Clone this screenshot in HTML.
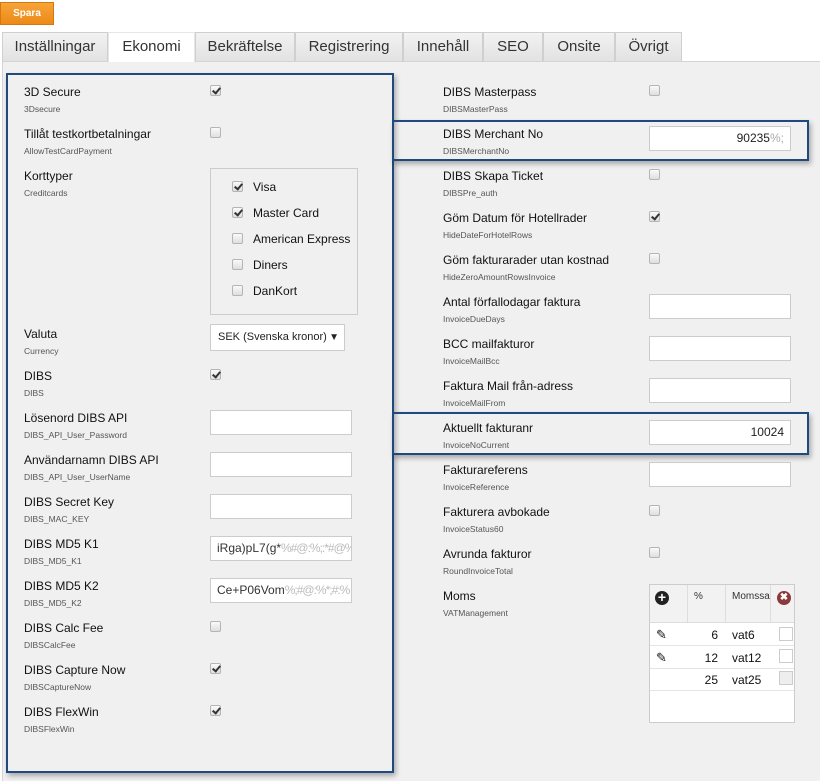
<!DOCTYPE html>
<html><head><meta charset="utf-8"><style>
body{margin:0;width:820px;height:784px;background:#fff;font-family:"Liberation Sans",Arial,sans-serif;position:relative;overflow:hidden}
div,span{position:absolute;box-sizing:border-box}
.btn{left:0;top:2px;width:54px;height:23px;background:linear-gradient(#f7a43a,#ec8a16);border:1px solid #d27a10;color:#fff;font-size:10px;font-weight:bold;line-height:21px;text-align:center}
.tab{top:32px;height:29px;background:linear-gradient(#f2f2f2,#e2e2e2);border:1px solid #cfcfcf;border-bottom:none;font-size:15px;color:#333;text-align:center;line-height:28px}
.tab.a{background:#fff;height:30px}
.content{left:2px;top:61px;width:818px;height:720px;background:#f0f0f0;border-left:1px solid #d4d4d4;border-top:1px solid #d4d4d4}
.l{font-size:12px;color:#111;line-height:14px;white-space:nowrap}
.s{font-size:8.5px;color:#555;line-height:10px;white-space:nowrap}
.cb{width:11px;height:11px;border:1px solid #b5b5b5;border-radius:2px;background:linear-gradient(#fafafa,#dedede)}
.cb.c::after{content:"";position:absolute;left:3px;top:0px;width:3px;height:6px;border:solid #333;border-width:0 2px 2px 0;transform:rotate(40deg)}
.in{width:142px;height:25px;background:#fff;border:1px solid #ccc;font-size:12px;line-height:23px;padding:0 6px;color:#222;white-space:nowrap;overflow:hidden}
.blue{border:2px solid #1f4a80;box-shadow:2px 3px 5px rgba(0,0,0,.3)}
</style></head><body>
<div class="btn">Spara</div>
<div class="tab" style="left:2px;width:106px">Inställningar</div>
<div class="tab" style="left:195px;width:100px">Bekräftelse</div>
<div class="tab" style="left:295px;width:108px">Registrering</div>
<div class="tab" style="left:403px;width:80px">Innehåll</div>
<div class="tab" style="left:483px;width:60px">SEO</div>
<div class="tab" style="left:543px;width:72px">Onsite</div>
<div class="tab" style="left:615px;width:67px">Övrigt</div>
<div class="content"></div>
<div class="tab a" style="left:108px;width:87px;border-color:#e6e6e6">Ekonomi</div>

<div class="blue" style="left:6px;top:73px;width:388px;height:700px"></div>
<div class="blue" style="left:392px;top:120px;width:417px;height:41px;border-left:none"></div>
<div class="blue" style="left:392px;top:412px;width:417px;height:43px;border-left:none"></div>

<div class="l" style="left:24px;top:85px">3D Secure</div><div class="s" style="left:24px;top:104px">3Dsecure</div><div class="cb c" style="left:210px;top:85px"></div>
<div class="l" style="left:24px;top:127px">Tillåt testkortbetalningar</div><div class="s" style="left:24px;top:146px">AllowTestCardPayment</div><div class="cb" style="left:210px;top:127px"></div>
<div class="l" style="left:24px;top:169px">Korttyper</div><div class="s" style="left:24px;top:188px">Creditcards</div>
<div style="left:210px;top:168px;width:148px;height:147px;border:1px solid #ccc"></div>
<div class="cb c" style="left:232px;top:181px"></div><div class="l" style="left:253px;top:180px">Visa</div>
<div class="cb c" style="left:232px;top:207px"></div><div class="l" style="left:253px;top:206px">Master Card</div>
<div class="cb" style="left:232px;top:233px"></div><div class="l" style="left:253px;top:232px">American Express</div>
<div class="cb" style="left:232px;top:259px"></div><div class="l" style="left:253px;top:258px">Diners</div>
<div class="cb" style="left:232px;top:285px"></div><div class="l" style="left:253px;top:284px">DanKort</div>
<div class="l" style="left:24px;top:327px">Valuta</div><div class="s" style="left:24px;top:346px">Currency</div>
<div class="in" style="left:210px;top:324px;width:135px;height:27px;line-height:25px;font-size:11px;padding-left:7px">SEK (Svenska kronor)<span style="right:5px;top:0;font-size:10px">▼</span></div>
<div class="l" style="left:24px;top:369px">DIBS</div><div class="s" style="left:24px;top:388px">DIBS</div><div class="cb c" style="left:210px;top:369px"></div>
<div class="l" style="left:24px;top:411px">Lösenord DIBS API</div><div class="s" style="left:24px;top:430px">DIBS_API_User_Password</div><div class="in" style="left:210px;top:410px"></div>
<div class="l" style="left:24px;top:453px">Användarnamn DIBS API</div><div class="s" style="left:24px;top:472px">DIBS_API_User_UserName</div><div class="in" style="left:210px;top:452px"></div>
<div class="l" style="left:24px;top:495px">DIBS Secret Key</div><div class="s" style="left:24px;top:514px">DIBS_MAC_KEY</div><div class="in" style="left:210px;top:494px"></div>
<div class="l" style="left:24px;top:537px">DIBS MD5 K1</div><div class="s" style="left:24px;top:556px">DIBS_MD5_K1</div><div class="in" style="left:210px;top:536px;color:#333">iRga)pL7(g*<span style="position:static;color:#bbb;letter-spacing:-1px">%#@:%;:*#@%;#:</span></div>
<div class="l" style="left:24px;top:579px">DIBS MD5 K2</div><div class="s" style="left:24px;top:598px">DIBS_MD5_K2</div><div class="in" style="left:210px;top:578px;color:#333">Ce+P06Vom<span style="position:static;color:#bbb;letter-spacing:-1px">%;#@:%*;#:%</span></div>
<div class="l" style="left:24px;top:621px">DIBS Calc Fee</div><div class="s" style="left:24px;top:640px">DIBSCalcFee</div><div class="cb" style="left:210px;top:621px"></div>
<div class="l" style="left:24px;top:663px">DIBS Capture Now</div><div class="s" style="left:24px;top:682px">DIBSCaptureNow</div><div class="cb c" style="left:210px;top:663px"></div>
<div class="l" style="left:24px;top:705px">DIBS FlexWin</div><div class="s" style="left:24px;top:724px">DIBSFlexWin</div><div class="cb c" style="left:210px;top:705px"></div>

<div class="l" style="left:443px;top:85px">DIBS Masterpass</div><div class="s" style="left:443px;top:104px">DIBSMasterPass</div><div class="cb" style="left:649px;top:85px"></div>
<div class="l" style="left:443px;top:127px">DIBS Merchant No</div><div class="s" style="left:443px;top:146px">DIBSMerchantNo</div><div class="in" style="left:649px;top:126px;text-align:right">90235<span style="position:static;color:#aaa">%;</span></div>
<div class="l" style="left:443px;top:169px">DIBS Skapa Ticket</div><div class="s" style="left:443px;top:188px">DIBSPre_auth</div><div class="cb" style="left:649px;top:169px"></div>
<div class="l" style="left:443px;top:211px">Göm Datum för Hotellrader</div><div class="s" style="left:443px;top:230px">HideDateForHotelRows</div><div class="cb c" style="left:649px;top:211px"></div>
<div class="l" style="left:443px;top:253px">Göm fakturarader utan kostnad</div><div class="s" style="left:443px;top:272px">HideZeroAmountRowsInvoice</div><div class="cb" style="left:649px;top:253px"></div>
<div class="l" style="left:443px;top:295px">Antal förfallodagar faktura</div><div class="s" style="left:443px;top:314px">InvoiceDueDays</div><div class="in" style="left:649px;top:294px"></div>
<div class="l" style="left:443px;top:337px">BCC mailfakturor</div><div class="s" style="left:443px;top:356px">InvoiceMailBcc</div><div class="in" style="left:649px;top:336px"></div>
<div class="l" style="left:443px;top:379px">Faktura Mail från-adress</div><div class="s" style="left:443px;top:398px">InvoiceMailFrom</div><div class="in" style="left:649px;top:378px"></div>
<div class="l" style="left:443px;top:421px">Aktuellt fakturanr</div><div class="s" style="left:443px;top:440px">InvoiceNoCurrent</div><div class="in" style="left:649px;top:420px;text-align:right">10024</div>
<div class="l" style="left:443px;top:463px">Fakturareferens</div><div class="s" style="left:443px;top:482px">InvoiceReference</div><div class="in" style="left:649px;top:462px"></div>
<div class="l" style="left:443px;top:505px">Fakturera avbokade</div><div class="s" style="left:443px;top:524px">InvoiceStatus60</div><div class="cb" style="left:649px;top:505px"></div>
<div class="l" style="left:443px;top:547px">Avrunda fakturor</div><div class="s" style="left:443px;top:566px">RoundInvoiceTotal</div><div class="cb" style="left:649px;top:547px"></div>
<div class="l" style="left:443px;top:589px">Moms</div><div class="s" style="left:443px;top:608px">VATManagement</div>

<div style="left:649px;top:584px;width:146px;height:139px;background:#fff;border:1px solid #ccc"></div>
<div style="left:650px;top:585px;width:144px;height:38px;background:#f2f2f2;border-bottom:1px solid #ddd"></div>
<div style="left:687px;top:585px;width:1px;height:38px;background:#ddd"></div>
<div style="left:725px;top:585px;width:1px;height:38px;background:#ddd"></div>
<div style="left:770px;top:585px;width:1px;height:38px;background:#ddd"></div>
<div style="left:655px;top:591px;width:14px;height:14px;border-radius:50%;background:#222;color:#fff;font-size:14px;font-weight:bold;line-height:13px;text-align:center">+</div>
<div class="s" style="left:694px;top:592px;font-size:10px;color:#333">%</div>
<div class="s" style="left:732px;top:592px;font-size:10px;color:#333;width:38px;overflow:hidden">Momssats</div>
<div style="left:777px;top:591px;width:14px;height:14px;border-radius:50%;background:#8b3a3a;color:#fff;font-size:10px;font-weight:bold;line-height:14px;text-align:center">✖</div>
<div style="left:650px;top:645px;width:144px;height:1px;background:#e4e4e4"></div>
<div style="left:650px;top:668px;width:144px;height:1px;background:#e4e4e4"></div>
<div style="left:650px;top:690px;width:144px;height:1px;background:#e4e4e4"></div>
<div class="l" style="left:656px;top:628px;font-size:13px">✎</div><div class="l" style="left:656px;top:651px;font-size:13px">✎</div>
<div class="l" style="left:700px;top:628px;width:18px;text-align:right">6</div><div class="l" style="left:732px;top:628px">vat6</div>
<div class="l" style="left:700px;top:651px;width:18px;text-align:right">12</div><div class="l" style="left:732px;top:651px">vat12</div>
<div class="l" style="left:700px;top:673px;width:18px;text-align:right">25</div><div class="l" style="left:732px;top:673px">vat25</div>
<div style="left:779px;top:627px;width:14px;height:14px;border:1px solid #ccc;background:#fff"></div>
<div style="left:779px;top:649px;width:14px;height:14px;border:1px solid #ccc;background:#fff"></div>
<div style="left:779px;top:671px;width:14px;height:14px;border:1px solid #ccc;background:#eee"></div>
</body></html>
